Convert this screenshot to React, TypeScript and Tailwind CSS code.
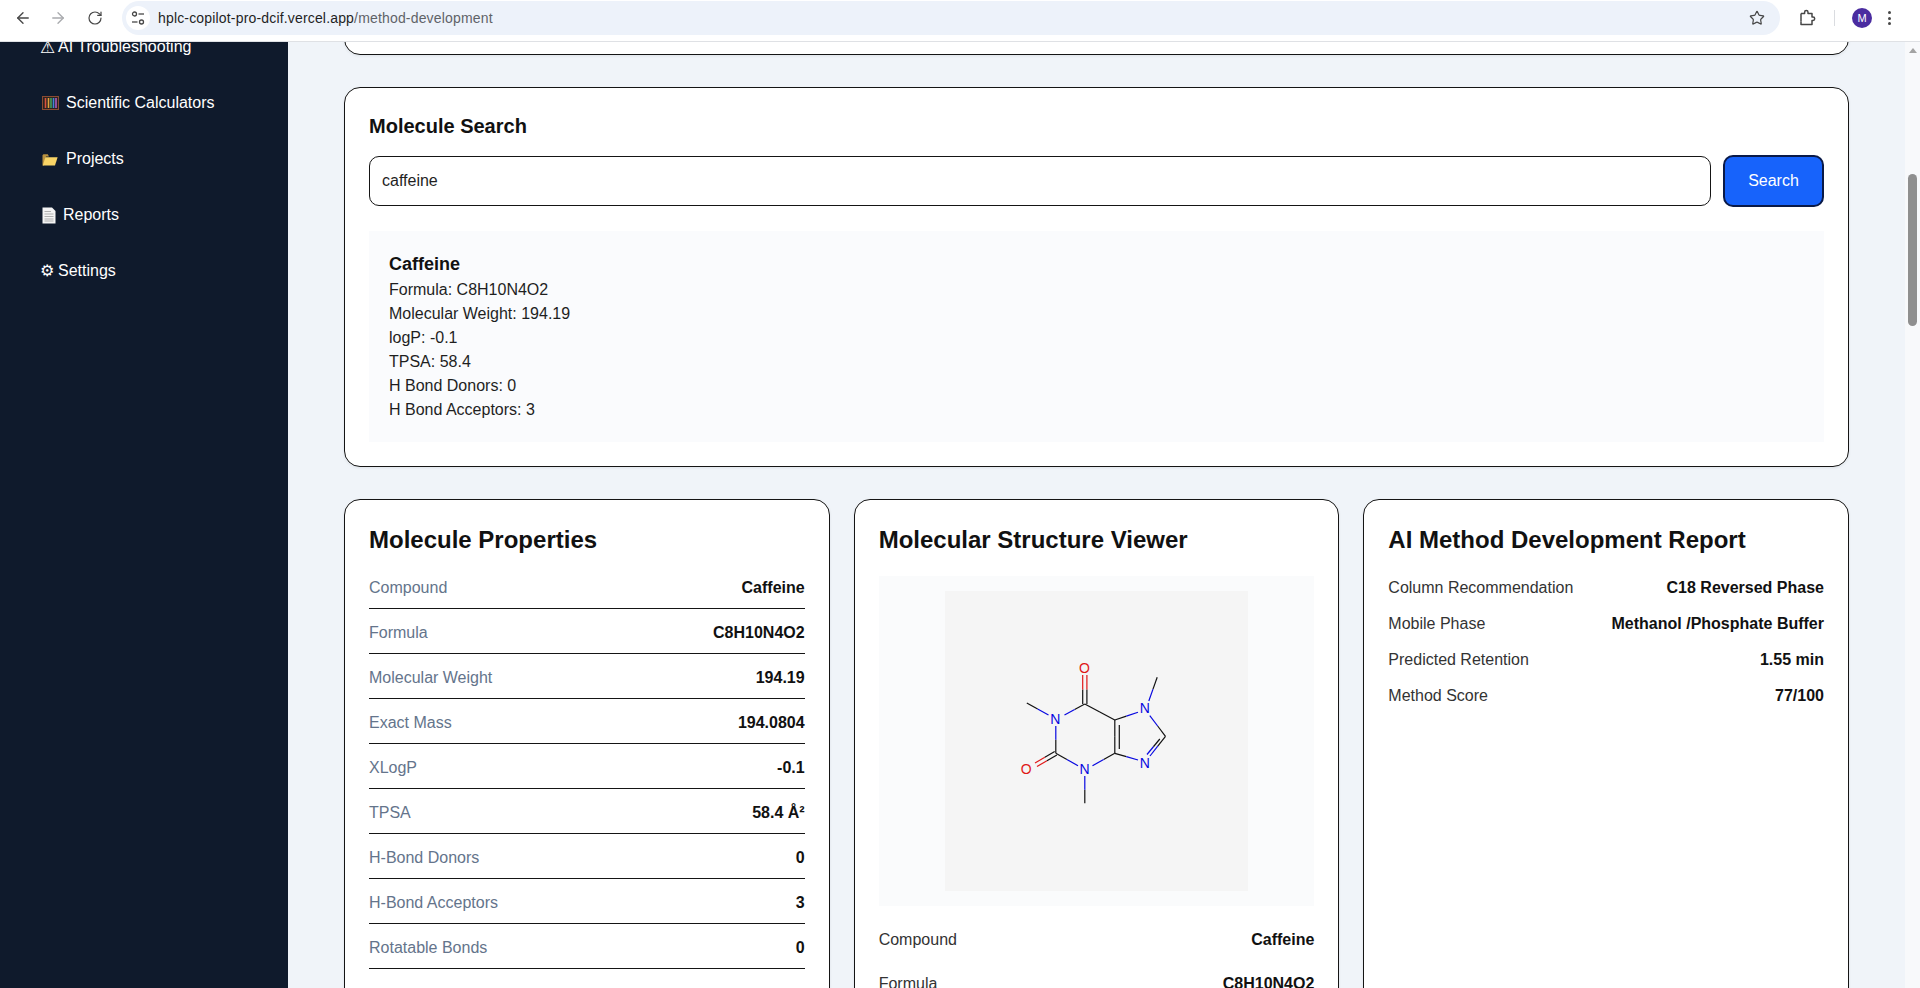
import { ArrowLeft, ArrowRight, RotateCw, Star } from "lucide-react";

const navFont = "[font-family:'Liberation_Sans',Arial,sans-serif]";

const properties = [
  ["Compound", "Caffeine"],
  ["Formula", "C8H10N4O2"],
  ["Molecular Weight", "194.19"],
  ["Exact Mass", "194.0804"],
  ["XLogP", "-0.1"],
  ["TPSA", "58.4 Å²"],
  ["H-Bond Donors", "0"],
  ["H-Bond Acceptors", "3"],
  ["Rotatable Bonds", "0"],
];

const report = [
  ["Column Recommendation", "C18 Reversed Phase"],
  ["Mobile Phase", "Methanol /Phosphate Buffer"],
  ["Predicted Retention", "1.55 min"],
  ["Method Score", "77/100"],
];

const searchLines = [
  "Formula: C8H10N4O2",
  "Molecular Weight: 194.19",
  "logP: -0.1",
  "TPSA: 58.4",
  "H Bond Donors: 0",
  "H Bond Acceptors: 3",
];

function AbacusIcon() {
  return (
    <svg width="17" height="14" viewBox="0 0 17 14" className="block">
      <rect x="0.5" y="0.5" width="16" height="13" fill="#2b2320" stroke="#8a4b32" />
      <path d="M3.5 2v10" stroke="#d9503f" strokeWidth="1.6" />
      <path d="M6.5 2v10" stroke="#e0a23c" strokeWidth="1.6" />
      <path d="M9 2v10" stroke="#45a05a" strokeWidth="1.6" />
      <path d="M11.5 2v10" stroke="#3f86d6" strokeWidth="1.6" />
      <path d="M14 2v10" stroke="#b05bc0" strokeWidth="1.6" />
    </svg>
  );
}

function FolderIcon() {
  return (
    <svg width="16" height="13" viewBox="0 0 16 13" className="block">
      <path d="M0.5 2.2V12.5H2L4 3.5H7L5.8 1.2H1.4Z" fill="#b9913f" />
      <path d="M3.4 4.2H15.6L13 12.6H0.8Z" fill="#f8d466" />
    </svg>
  );
}

function PageIcon() {
  return (
    <svg width="14" height="17" viewBox="0 0 14 17" className="block">
      <path d="M0.5 0.5H10L13.5 4V16.5H0.5Z" fill="#f4f4f4" />
      <path d="M2.5 4.5H9M2.5 7H11.5M2.5 9.5H11.5M2.5 12H11.5M2.5 14H11.5" stroke="#a8a8a8" strokeWidth="0.9" />
    </svg>
  );
}

function Sidebar() {
  return (
    <aside className="w-[288px] shrink-0 overflow-hidden bg-[#0f1a2c] text-[16px] text-white">
      <div className="-mt-[23px] pl-10">
        <div className="flex h-14 items-center">
          <span className="w-[18px] text-[17px] leading-none [font-family:'DejaVu_Sans',sans-serif]">⚠</span>
          <span>AI Troubleshooting</span>
        </div>
        <div className="flex h-14 items-center pl-[2px]">
          <span className="w-[24px]"><AbacusIcon /></span>
          <span>Scientific Calculators</span>
        </div>
        <div className="flex h-14 items-center pl-[2px]">
          <span className="w-[24px]"><FolderIcon /></span>
          <span>Projects</span>
        </div>
        <div className="flex h-14 items-center pl-[2px]">
          <span className="w-[21px]"><PageIcon /></span>
          <span>Reports</span>
        </div>
        <div className="flex h-14 items-center">
          <span className="w-[18px] text-[16px] leading-none [font-family:'DejaVu_Sans',sans-serif]">⚙</span>
          <span>Settings</span>
        </div>
      </div>
    </aside>
  );
}

function BrowserBar() {
  return (
    <header className="flex h-[42px] shrink-0 items-center border-b border-[#dfe1e5] bg-white pb-[5px] text-[#474747]">
      <div className="flex w-[122px] shrink-0 items-center pl-[14px]">
        <ArrowLeft size={18} strokeWidth={1.8} />
        <ArrowRight size={18} strokeWidth={1.8} className="ml-[17px] text-[#a9abae]" />
        <RotateCw size={16} strokeWidth={1.8} className="ml-[20px]" />
      </div>
      <div className="flex h-[34px] w-[1658px] shrink-0 items-center rounded-full bg-[#edf2fa] pl-1 pr-[15px]">
        <span className="flex h-6 w-6 items-center justify-center rounded-full bg-white">
          <svg width="16" height="16" viewBox="0 0 16 16" fill="none" stroke="#474747" strokeWidth="1.3">
            <circle cx="4.5" cy="4" r="2" />
            <path d="M8.5 4H14" />
            <circle cx="11.5" cy="12" r="2" />
            <path d="M2 12H7.5" />
          </svg>
        </span>
        <span className="ml-2 text-[14px] leading-none tracking-[0.17px] text-[#1f1f1f]">
          hplc-copilot-pro-dcif.vercel.app<span className="text-[#5f6368]">/method-development</span>
        </span>
        <Star size={16} strokeWidth={1.8} className="ml-auto" />
      </div>
      <svg width="18" height="18" viewBox="0 0 18 18" fill="none" stroke="#474747" strokeWidth="1.5" className="ml-[18px]">
        <path d="M3 4.5H6.6V3.2a1.7 1.7 0 0 1 3.4 0V4.5H14V8h1a1.7 1.7 0 0 1 0 3.4H14V15.5H4L3 15.5V12.6" strokeLinejoin="round" />
        <path d="M3 4.5V12.6" />
      </svg>
      <span className="ml-[18px] h-[16px] w-px bg-[#dadce0]" />
      <span className="ml-[17px] flex h-5 w-5 items-center justify-center rounded-full bg-[#4a2ca0] text-[11px] text-white">M</span>
      <span className="ml-[16px] flex flex-col gap-[2.5px]">
        <span className="h-[3px] w-[3px] rounded-full bg-[#474747]" />
        <span className="h-[3px] w-[3px] rounded-full bg-[#474747]" />
        <span className="h-[3px] w-[3px] rounded-full bg-[#474747]" />
      </span>
    </header>
  );
}

function Bond({ a, b, ca = "#111111", cb = "#111111" }: { a: number[]; b: number[]; ca?: string; cb?: string }) {
  const mx = (a[0] + b[0]) / 2;
  const my = (a[1] + b[1]) / 2;
  return (
    <>
      <line x1={a[0]} y1={a[1]} x2={mx} y2={my} stroke={ca} strokeWidth="1.2" />
      <line x1={mx} y1={my} x2={b[0]} y2={b[1]} stroke={cb} strokeWidth="1.2" />
    </>
  );
}

function Caffeine() {
  const blue = "#0808e0";
  const red = "#e01818";
  return (
    <svg width="303" height="300" viewBox="-1.5 0 303 300" className="block bg-[#f5f5f5]">
      <Bond a={[136.2, 113]} b={[136.2, 84]} cb={red} />
      <Bond a={[140.4, 113]} b={[140.4, 84]} cb={red} />
      <Bond a={[138.3, 113]} b={[118, 124]} cb={blue} />
      <Bond a={[80.3, 112]} b={[102, 124]} cb={blue} />
      <Bond a={[109.3, 162.3]} b={[109.3, 135]} cb={blue} />
      <Bond a={[108.2, 160.5]} b={[88.5, 172]} cb={red} />
      <Bond a={[110.4, 164]} b={[90.5, 175.5]} cb={red} />
      <Bond a={[109.3, 162.3]} b={[131.5, 174.7]} cb={blue} />
      <Bond a={[138.3, 212.3]} b={[138.3, 185]} cb={blue} />
      <Bond a={[168.3, 162.3]} b={[146, 174.7]} cb={blue} />
      <Bond a={[168.3, 162.3]} b={[168.3, 129]} />
      <Bond a={[172.8, 158]} b={[172.8, 134]} />
      <Bond a={[168.3, 129]} b={[138.3, 113]} />
      <Bond a={[168.3, 129]} b={[191.5, 121.3]} cb={blue} />
      <Bond a={[210.7, 86.3]} b={[202.3, 110]} cb={blue} />
      <Bond a={[219, 145.3]} b={[203.3, 124.7]} cb={blue} />
      <Bond a={[219, 145.3]} b={[203.5, 165]} cb={blue} />
      <Bond a={[213.3, 148]} b={[200.5, 163.5]} cb={blue} />
      <Bond a={[168.3, 162.3]} b={[191.5, 169]} cb={blue} />
      <g fontSize="14" textAnchor="middle" fontFamily="'Liberation Sans', Arial, sans-serif">
        <text x="138" y="82" fill={red}>O</text>
        <text x="79.7" y="183" fill={red}>O</text>
        <text x="108.7" y="133" fill={blue}>N</text>
        <text x="138" y="183" fill={blue}>N</text>
        <text x="198.3" y="122" fill={blue}>N</text>
        <text x="198.3" y="176.5" fill={blue}>N</text>
      </g>
    </svg>
  );
}

function Card({ title, children }: { title: string; children: React.ReactNode }) {
  return (
    <section className="rounded-2xl border border-[#151515] bg-white p-6 shadow-[0_1px_3px_rgba(15,23,42,0.08)]">
      <h2 className="mb-5 text-[24px] font-bold leading-8 text-[#111111]">{title}</h2>
      {children}
    </section>
  );
}

export default function App() {
  return (
    <div className={`flex h-screen w-full flex-col overflow-hidden bg-[#f0f4f9] ${navFont}`}>
      <BrowserBar />
      <div className="flex min-h-0 flex-1">
        <Sidebar />
        <main className="min-w-0 flex-1 overflow-hidden px-14">
          <div className="-mt-[46px]">
            <div className="mb-8 h-[59px] rounded-2xl border border-[#151515] bg-white shadow-[0_1px_3px_rgba(15,23,42,0.08)]" />

            <section className="mb-8 rounded-2xl border border-[#151515] bg-white p-6 shadow-[0_1px_3px_rgba(15,23,42,0.08)]">
              <h3 className="mb-[15px] text-[20px] font-bold leading-7 text-[#111111]">Molecule Search</h3>
              <div className="flex items-center gap-3">
                <input
                  readOnly
                  value="caffeine"
                  className="h-[50px] min-w-0 flex-1 rounded-[10px] border border-[#151515] bg-white px-3 text-[16px] text-[#1f1f1f] outline-none"
                />
                <button
                  type="button"
                  className="h-[52px] w-[101px] rounded-[10px] border-2 border-[#0a1a48] bg-[#1763fb] text-[16px] text-white"
                >
                  Search
                </button>
              </div>
              <div className="mt-6 bg-[#fafbfd] p-5 text-[16px] leading-6 text-[#1f1f1f]">
                <div className="text-[18px] font-bold leading-[27px] text-[#111111]">Caffeine</div>
                {searchLines.map((line) => (
                  <div key={line}>{line}</div>
                ))}
              </div>
            </section>

            <div className="grid grid-cols-3 items-start gap-6">
              <Card title="Molecule Properties">
                {properties.map(([label, value]) => (
                  <div
                    key={label}
                    className="mb-3 flex justify-between border-b border-[#151515] pb-2 text-[16px] leading-6"
                  >
                    <span className="text-[#64748b]">{label}</span>
                    <span className="font-bold text-[#111111]">{value}</span>
                  </div>
                ))}
              </Card>

              <Card title="Molecular Structure Viewer">
                <div className="mb-[22px] mt-[2px] flex justify-center bg-[#fafbfc] py-[15px]">
                  <Caffeine />
                </div>
                {properties.slice(0, 3).map(([label, value]) => (
                  <div key={label} className="mb-5 flex justify-between text-[16px] leading-6">
                    <span className="text-[#333333]">{label}</span>
                    <span className="font-bold text-[#111111]">{value}</span>
                  </div>
                ))}
              </Card>

              <Card title="AI Method Development Report">
                {report.map(([label, value]) => (
                  <div key={label} className="mb-3 flex justify-between text-[16px] leading-6">
                    <span className="text-[#333333]">{label}</span>
                    <span className="font-bold text-[#111111]">{value}</span>
                  </div>
                ))}
                <div className="h-[400px]" />
              </Card>
            </div>
          </div>
        </main>
        <div className="flex w-[15px] shrink-0 flex-col items-center bg-[#f8f9fb] pt-[6px]">
          <span className="h-0 w-0 border-x-[4px] border-b-[5px] border-x-transparent border-b-[#a3a3a3]" />
          <span className="mt-[121px] h-[152px] w-[9px] rounded-full bg-[#8f8f8f]" />
        </div>
      </div>
    </div>
  );
}
